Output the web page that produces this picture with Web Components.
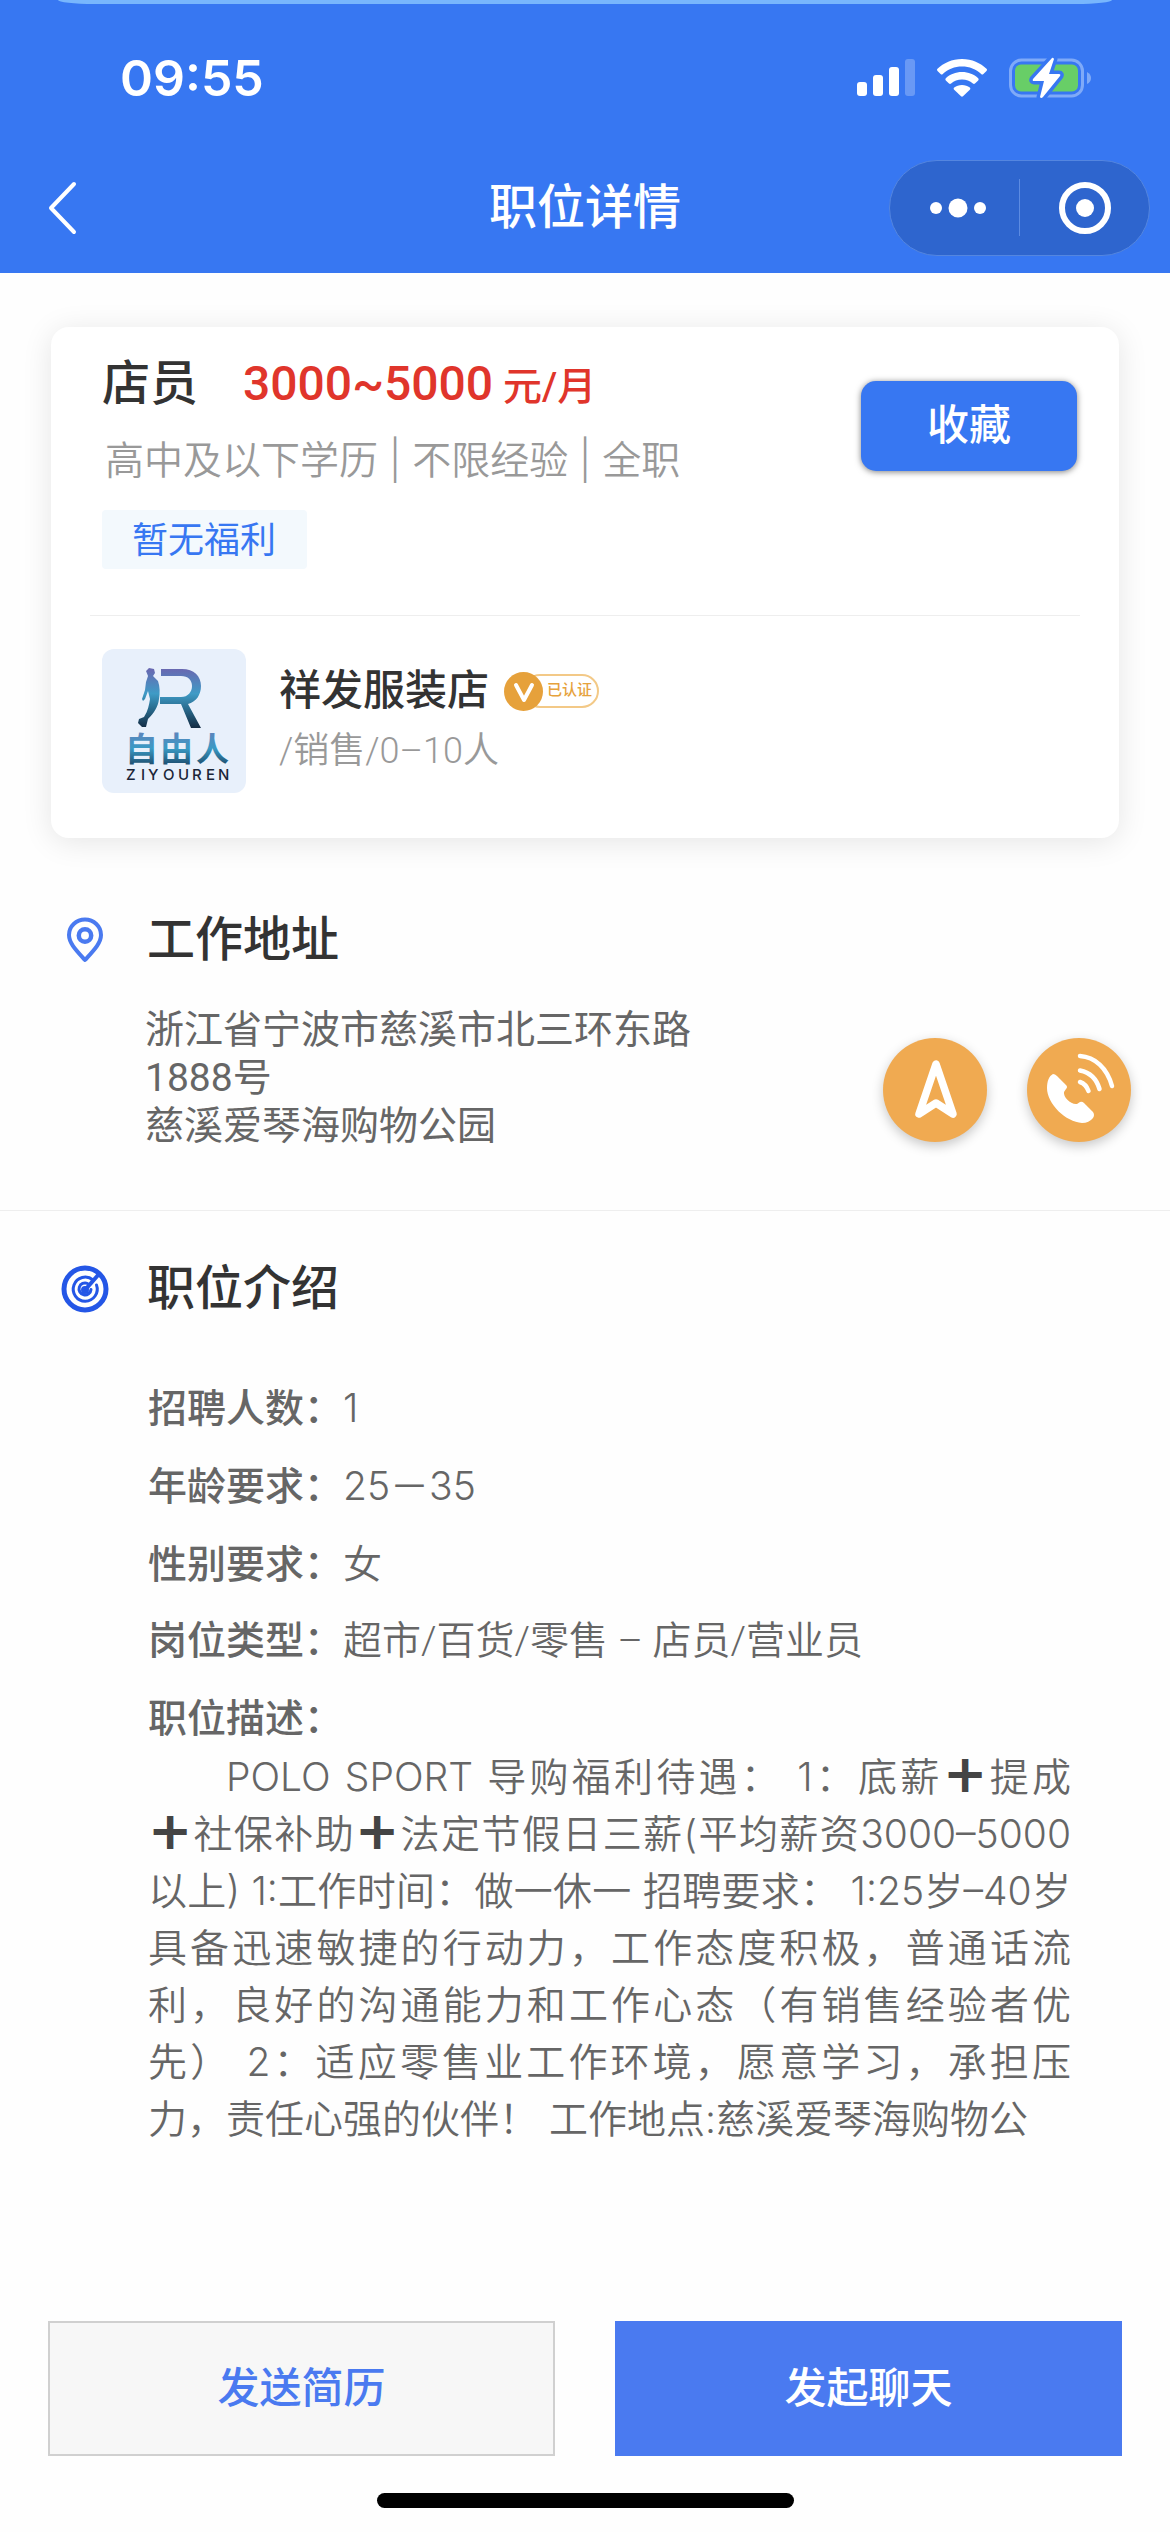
<!DOCTYPE html>
<html lang="zh-CN">
<head>
<meta charset="utf-8">
<meta name="viewport" content="width=device-width">
<title>职位详情</title>
<style>
  body { margin: 0; background: #fefefe; font-family: Roboto, "Noto Sans CJK SC", sans-serif; color: #666; --light: Inter, "Noto Sans CJK SC", sans-serif; }
</style>
</head>
<body>
<job-page></job-page>
<script>
const define = (name, html) => {
  const template = document.createElement('template');
  template.innerHTML = html;
  customElements.define(name, class extends HTMLElement {
    constructor() {
      super();
      this.attachShadow({ mode: 'open' }).append(template.content.cloneNode(true));
    }
  });
};

define('status-bar', `
<style>
  :host { display: flex; align-items: center; justify-content: space-between; box-sizing: border-box; height: 142px; padding: 14px 78px 0 120px; color: #fff; position: relative; }
  time { font: 600 50px/60px Inter, sans-serif; }
  .peek { position: absolute; top: 0; left: 58px; right: 58px; height: 4px; background: #78b6fd; border-radius: 0 0 36px 36px / 0 0 4px 4px; }
  .icons { display: flex; align-items: center; gap: 22px; }
  svg { display: block; }
</style>
<div class="peek"></div>
<time>09:55</time>
<div class="icons">
  <svg width="58" height="38" viewBox="0 0 58 38" fill="#fff"><rect y="23" width="10" height="14" rx="3"/><rect x="16" y="16" width="10" height="21" rx="3"/><rect x="32" y="8" width="10" height="29" rx="3"/><rect x="48" width="10" height="37" rx="3" opacity=".25"/></svg>
  <svg width="50" height="38" viewBox="0 0 50 38" fill="#fff"><path d="M25 0C35 0 43.500 4 49.500 9.700Q50.500 10.800 49.500 11.900L46.400 15Q45.300 16 44.200 15C39 10.200 32.400 7.600 25 7.600S11 10.200 5.800 15Q4.700 16 3.600 15L.5 11.900Q-.5 10.800 .5 9.700C6.500 4 15 0 25 0Z"/><path d="M25 13C31.400 13 37 15.300 41.200 19.200Q42.200 20.300 41.200 21.400L38 24.600Q37 25.500 35.900 24.600C33 22 29.300 20.600 25 20.600S17 22 14.100 24.600Q13 25.500 12 24.600L8.800 21.400Q7.800 20.300 8.800 19.200C13 15.300 18.600 13 25 13Z"/><path d="M25 26C28 26 30.700 27 32.800 28.600Q33.900 29.700 32.800 30.800L26 37.300Q25 38.100 24 37.300L17.200 30.800Q16.100 29.700 17.200 28.600C19.300 27 22 26 25 26Z"/></svg>
  <svg width="83" height="42" viewBox="0 0 83 42"><rect x="1.500" y="3" width="72" height="36" rx="11" fill="none" stroke="#7faaf8" stroke-width="3"/><rect x="6" y="7.500" width="63" height="27" rx="6" fill="#68ce67"/><path d="M78 15q4 2 4 6t-4 6z" fill="#7faaf8"/><path d="M43 1 24 22q-1 2 1 2h10l-4 16q1 2 3 0l17-21q1-2-1-2H40L45 2q-1-2-2-1Z" fill="#fff" stroke="#3777f2" stroke-width="7" stroke-linejoin="round"/><path d="M43 1 24 22q-1 2 1 2h10l-4 16q1 2 3 0l17-21q1-2-1-2H40L45 2q-1-2-2-1Z" fill="#fff"/></svg>
</div>`);

define('nav-bar', `
<style>
  :host { display: grid; grid-template-columns: 1fr auto 1fr; align-items: center; height: 131px; padding: 0 20px; color: #fff; }
  button { border: 0; background: none; padding: 0; color: inherit; display: block; }
  svg { display: block; }
  .back { width: 48px; margin-left: 20px; }
  h1 { margin: 0; font-size: 48px; line-height: 66px; font-weight: 500; }
  .capsule { justify-self: end; display: flex; align-items: center; box-sizing: border-box; width: 261px; height: 96px; border: 1px solid #5486e0; border-radius: 48px; background: #2e65ce; }
  .capsule button { flex: 1; display: flex; justify-content: center; }
  .capsule .more { flex: 0 0 129px; padding-left: 6px; box-sizing: border-box; }
  .capsule i { width: 1px; height: 57px; background: #5c8be2; }
</style>
<button class="back" aria-label="返回"><svg width="48" height="56" viewBox="0 0 48 56"><path d="M34 4 11 28 34 52" fill="none" stroke="#fff" stroke-width="4" stroke-linecap="round" stroke-linejoin="round"/></svg></button>
<h1><slot></slot></h1>
<div class="capsule">
  <button class="more" aria-label="更多"><svg width="56" height="20" viewBox="0 0 56 20" fill="#fff"><circle cx="6" cy="10" r="6"/><circle cx="28" cy="10" r="9.500"/><circle cx="50" cy="10" r="6"/></svg></button>
  <i></i>
  <button aria-label="关闭"><svg width="52" height="52" viewBox="0 0 52 52"><circle cx="26" cy="26" r="23" fill="none" stroke="#fff" stroke-width="6"/><circle cx="26" cy="26" r="9" fill="#fff"/></svg></button>
</div>`);

define('company-logo', `
<style>
  :host { display: block; width: 144px; height: 144px; border-radius: 12px; overflow: hidden; background: #e8f0fb; }
  svg { display: block; }
</style>
<svg width="144" height="144" viewBox="0 0 144 144">
  <defs>
    <linearGradient id="r" x1="0" y1="19" x2="0" y2="80" gradientUnits="userSpaceOnUse"><stop offset="0" stop-color="#6a66b0"/><stop offset=".42" stop-color="#3f9bc6"/><stop offset=".65" stop-color="#2b6f92"/><stop offset="1" stop-color="#12283f"/></linearGradient>
    <linearGradient id="t" x1="0" y1="84" x2="0" y2="115" gradientUnits="userSpaceOnUse"><stop offset="0" stop-color="#5b86bd"/><stop offset=".5" stop-color="#3a9ac4"/><stop offset="1" stop-color="#1f5274"/></linearGradient>
  </defs>
  <path d="M59 20H80C92 20 99 27 99 37 99 46 94 53 86 55L99 79H89L79 55H58V48H79C86 48 90 43 90 37 90 31 86 27 79 27H59Z" fill="url(#r)"/>
  <path d="M44 22 47 19 52 20 53 24 51 27 56 32C58 38 58 44 57 50 56 58 52 64 46 70L44 78 40 78 36 74 37 70 42 68C46 62 47 56 48 50L46 42 43 50 41 52 40 50 43 41 44 33 46 27Z" fill="url(#r)"/>
  <text y="112" x="23 58 94" font-family="Noto Sans CJK SC, sans-serif" font-weight="700" font-size="33" fill="url(#t)">自由人</text>
  <text y="131" x="24 39 46 61 76 90 104 116" font-family="Inter, sans-serif" font-weight="500" font-size="15" fill="#1a2538">ZIYOUREN</text>
</svg>`);

define('verified-badge', `
<style>
  :host { display: flex; align-items: center; height: 40px; }
  svg { display: block; position: relative; }
  span { box-sizing: border-box; height: 34px; margin-left: -20px; padding: 0 5px 0 22px; border: 2px solid #f3c987; border-radius: 17px; font-size: 15px; line-height: 29px; font-weight: 500; color: #e6a23c; }
</style>
<svg width="39" height="39" viewBox="0 0 39 39"><circle cx="19.500" cy="19.500" r="19.500" fill="#e6a13b"/><path d="m12 13 8 15 8-15" fill="none" stroke="#fff" stroke-width="4" stroke-linecap="round" stroke-linejoin="round"/></svg>
<span><slot></slot></span>`);

define('job-card', `
<style>
  :host { display: block; margin: 54px 51px 0; border-radius: 18px; background: #fff; box-shadow: 0 4px 30px rgba(0,0,0,.1); }
  .head { display: flex; justify-content: space-between; align-items: flex-start; margin: 0 39px; padding: 24px 3px 46px 12px; border-bottom: 1px solid #eee; }
  .row { display: flex; align-items: baseline; height: 66px; line-height: 66px; }
  h2 { margin: 0 45px 0 0; font-size: 48px; font-weight: 500; color: #333; }
  .pay { font-size: 48px; font-weight: 500; color: #e0352b; }
  .unit { margin-left: 10px; font-size: 39px; font-weight: 500; color: #e0352b; }
  p { margin: 16px 0 0 3px; height: 54px; font-family: var(--light); font-size: 39px; line-height: 54px; font-weight: 350; color: #999; }
  .tag { width: fit-content; margin-top: 23px; padding: 0 31px 0 30px; border-radius: 4px; background: #f3f9fd; font-size: 36px; line-height: 62px; height: 59px; color: #3777f2; }
  button { margin-top: 30px; width: 216px; height: 90px; border: 0; border-radius: 15px; background: #3777f2; box-shadow: 0 1px 6px rgba(0,0,0,.5); color: #fff; font: 500 42px/60px Roboto, "Noto Sans CJK SC", sans-serif; }
  .company { display: flex; align-items: flex-start; gap: 33px; padding: 33px 51px 45px; }
  .info { padding-top: 12px; }
  .name { display: flex; align-items: center; gap: 15px; }
  h3 { margin: 0; font-size: 42px; line-height: 60px; font-weight: 500; color: #333; }
  .sub { margin-top: 6px; font-size: 36px; line-height: 48px; font-weight: 350; color: #999; }
</style>
<div class="head">
  <div>
    <div class="row"><h2>店员</h2><span class="pay">3000~5000</span><span class="unit">元/月</span></div>
    <p>高中及以下学历 | 不限经验 | 全职</p>
    <div class="tag">暂无福利</div>
  </div>
  <button>收藏</button>
</div>
<div class="company">
  <company-logo></company-logo>
  <div class="info">
    <div class="name"><h3>祥发服装店</h3><verified-badge>已认证</verified-badge></div>
    <div class="sub">/销售/0–10人</div>
  </div>
</div>`);

define('section-title', `
<style>
  :host { display: flex; align-items: center; height: 72px; }
  .icon { display: flex; justify-content: center; flex: 0 0 48px; margin: 0 38px 0 61px; }
  h2 { margin: 0; font-size: 48px; line-height: 72px; font-weight: 500; color: #333; }
</style>
<span class="icon"><slot name="icon"></slot></span>
<h2><slot></slot></h2>`);

define('round-button', `
<style>
  :host { display: block; }
  button { display: block; width: 104px; height: 104px; padding: 0; border: 0; border-radius: 50%; background: #f0aa51; box-shadow: 0 4px 12px rgba(0,0,0,.22); }
</style>
<button><slot></slot></button>`);

define('work-address', `
<style>
  :host { display: block; padding: 66px 0 60px; border-bottom: 1px solid #eee; }
  svg { display: block; }
  .body { display: flex; align-items: flex-end; justify-content: space-between; margin-top: 30px; padding: 0 39px 0 145px; }
  address { font-style: normal; font-size: 39px; line-height: 48px; color: #666; }
  .actions { display: flex; gap: 40px; margin-bottom: 8px; }
</style>
<section-title><svg slot="icon" width="38" height="46" viewBox="0 0 38 46" fill="none" stroke="#4a7af0"><path d="M19 43C10 33 3 26 3 18a16 15.500 0 0 1 32 0c0 8-7 15-16 25Z" stroke-width="4" stroke-linejoin="round"/><circle cx="19" cy="18.500" r="6.200" stroke-width="4.500"/></svg>工作地址</section-title>
<div class="body">
  <address>浙江省宁波市慈溪市北三环东路<br>1888号<br>慈溪爱琴海购物公园</address>
  <div class="actions">
    <round-button><svg width="104" height="104" viewBox="0 0 104 104"><path d="M53 26 36 76 53 65 70 76Z" fill="none" stroke="#fff" stroke-width="7.500" stroke-linejoin="round"/></svg></round-button>
    <round-button><svg width="104" height="104" viewBox="0 0 104 104" fill="none" stroke="#fff" stroke-linecap="round"><path d="M26 36Q28 36 30 38L39 47Q41 49 39 51L37 54C36 59 44 67 50 66L53 64Q55 63 57 65L66 74Q68 77 66 80 62 85 55 85C39 84 20 66 20 50 20 43 22 38 26 36Z" fill="#fff" stroke="none"/><path d="M53 44q6 2 8.500 9M53 32.500q15 3 19.500 18.500M53 18c15 1 27 12 32 30" stroke-width="4.500"/></svg></round-button>
  </div>
</div>`);

define('info-row', `
<style>
  :host { display: flex; align-items: baseline; height: 57px; font-size: 39px; line-height: 57px; color: #666; }
  b { font-weight: 500; }
  .value { font-family: var(--light); font-weight: 350; }
  :host(.category) .value { font-family: inherit; }
</style>
<b><slot name="label"></slot></b><span class="value"><slot></slot></span>`);

define('job-intro', `
<style>
  :host { display: block; padding: 42px 0 120px; }
  svg { display: block; }
  .body { display: flex; flex-direction: column; gap: 21px; margin: 54px 100px 0 148px; }
  .text { margin: 0 99px 0 148px; font-family: var(--light); font-size: 39px; line-height: 57px; font-weight: 350; color: #666; }
  .text span { display: block; height: 57px; white-space: nowrap; text-align: justify; text-align-last: justify; }
  .text span:first-child { padding-left: 2em; }
  .text span:last-child { text-align-last: left; }
  b { padding: 0 4px; font-family: "DejaVu Sans"; font-size: 48px; line-height: 48px; font-weight: 400; color: #444; }
</style>
<section-title><svg slot="icon" width="48" height="48" viewBox="0 0 48 48" fill="none" stroke="#2456e6" stroke-linecap="round"><circle cx="24" cy="24" r="21" stroke-width="5"/><path d="M32 15a12 12 0 1 0 3.500 5" stroke-width="3"/><path d="M26.500 18.500a6 6 0 1 0 3.500 6" stroke-width="3"/><path d="M24 25 38 9" stroke-width="4"/><circle cx="24" cy="25" r="2.500" stroke-width="3"/></svg>职位介绍</section-title>
<div class="body">
  <info-row><span slot="label">招聘人数：</span>1</info-row>
  <info-row><span slot="label">年龄要求：</span>25－35</info-row>
  <info-row><span slot="label">性别要求：</span>女</info-row>
  <info-row class="category"><span slot="label">岗位类型：</span>超市/百货/零售 – 店员/营业员</info-row>
  <info-row><span slot="label">职位描述：</span></info-row>
</div>
<div class="text"><span>POLO SPORT 导购福利待遇： 1：底薪<b>➕&#xFE0E;</b>提成</span><span><b>➕&#xFE0E;</b>社保补助<b>➕&#xFE0E;</b>法定节假日三薪(平均薪资3000–5000</span><span>以上) 1:工作时间：做一休一 招聘要求： 1:25岁–40岁</span><span>具备迅速敏捷的行动力，工作态度积极，普通话流</span><span>利，良好的沟通能力和工作心态（有销售经验者优</span><span>先） 2：适应零售业工作环境，愿意学习，承担压</span><span>力，责任心强的伙伴！ 工作地点:慈溪爱琴海购物公</span></div>`);

define('action-bar', `
<style>
  :host { display: block; margin-top: auto; padding: 0 48px 24px; }
  .row { display: flex; gap: 60px; }
  button { flex: 1; height: 135px; box-sizing: border-box; border: 2px solid #d0d0d0; background: #f7f7f7; color: #4a7af0; font: 500 42px/60px Roboto, "Noto Sans CJK SC", sans-serif; }
  .primary { border-color: #4a7af0; background: #4a7af0; color: #fff; }
  .home { width: 417px; height: 15px; margin: 37px auto 0; border-radius: 8px; background: #000; }
</style>
<div class="row"><button>发送简历</button><button class="primary">发起聊天</button></div>
<div class="home"></div>`);

define('job-page', `
<style>
  :host { display: flex; flex-direction: column; min-height: 100vh; }
  header { background: #3777f2; }
</style>
<header><status-bar></status-bar><nav-bar>职位详情</nav-bar></header>
<job-card></job-card>
<work-address></work-address>
<job-intro></job-intro>
<action-bar></action-bar>`);
</script>
</body>
</html>
